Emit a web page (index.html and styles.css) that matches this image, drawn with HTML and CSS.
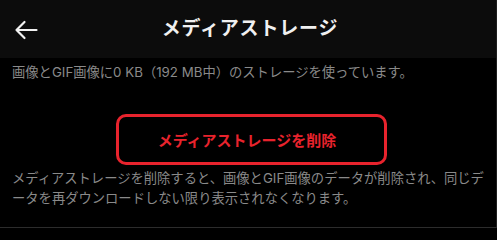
FILE: index.html
```html
<!DOCTYPE html>
<html lang="ja">
<head>
<meta charset="utf-8">
<title>メディアストレージ</title>
<link rel="stylesheet" href="styles.css">
</head>
<body>
<div class="screen">
  <header class="topbar">
    <div class="topbar-left">
      <svg class="back" width="24" height="20" viewBox="0 0 24 20" aria-hidden="true">
        <path d="M22.5 10H2.5M10.5 2L2.5 10L10.5 18" fill="none" stroke="#f2f2f2" stroke-width="2.2" stroke-linecap="round" stroke-linejoin="round"/>
      </svg>
    </div>
    <h1 class="title">メディアストレージ</h1>
    <div class="topbar-right"></div>
  </header>
  <main class="content">
    <p class="note usage">画像とGIF画像に0 KB（192 MB中）のストレージを使っています。</p>
    <div class="action">
      <button class="danger-btn">メディアストレージを削除</button>
    </div>
    <p class="note desc">メディアストレージを削除すると、画像とGIF画像のデータが削除され、同じデータを再ダウンロードしない限り表示されなくなります。</p>
  </main>
</div>
</body>
</html>
```

FILE: styles.css
```css
html, body {
  margin: 0;
  padding: 0;
  background: #000;
}
body {
  font-family: "Noto Sans CJK JP", "Noto Sans", sans-serif;
  width: 497px;
  height: 229px;
  overflow: hidden;
}
.screen {
  height: 227px;
  border-bottom: 1px solid #2c2c2c;
  border-right: 1px solid #1e1e1e;
  background: #000;
}
.topbar {
  height: 58px;
  background: #0c0c0c;
  display: grid;
  grid-template-columns: 1fr auto 1fr;
  align-items: center;
}
.topbar-left {
  display: flex;
  align-items: center;
  padding-left: 14px;
  padding-top: 2px;
}
.back {
  display: block;
}
.title {
  margin: 0;
  color: #f0f0f0;
  font-size: 19px;
  font-weight: 700;
  letter-spacing: 0.8px;
  line-height: 1;
  padding-bottom: 6px;
  padding-left: 4px;
}
.content {
  padding: 0 5px 0 12px;
}
.note {
  margin: 0;
  color: #8a8a8a;
  font-family: "Inter", "Noto Sans CJK JP", sans-serif;
  font-size: 13.3px;
  line-height: 20px;
}
.usage {
  padding-top: 4px;
}
.action {
  display: flex;
  justify-content: center;
  padding-right: 1px;
  margin-top: 32px;
}
.danger-btn {
  width: 271px;
  height: 51px;
  background: transparent;
  border: 3px solid #e8232d;
  border-radius: 10px;
  color: #e8232d;
  font-family: inherit;
  font-size: 15px;
  font-weight: 700;
  padding: 0 8px 0 0;
}
.desc {
  margin-top: 3px;
}
```
